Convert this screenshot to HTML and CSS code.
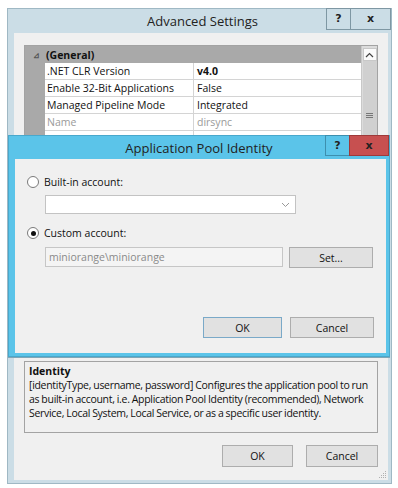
FILE: index.html
```html
<!DOCTYPE html>
<html>
<head>
<meta charset="utf-8">
<link rel="stylesheet" href="styles.css">
</head>
<body>
<div class="win">
  <div class="titlebar">
    <div class="title">Advanced Settings</div>
    <div class="tbtns">
      <div class="tb help">?</div>
      <div class="tb close">x</div>
    </div>
  </div>
  <div class="client">
    <div class="grid">
      <div class="gmain">
        <div class="ghead"><span class="exp">&#8895;</span><span class="gtitle">(General)</span></div>
        <div class="grow"><div class="gut"></div><div class="gname">.NET CLR Version</div><div class="gval bold">v4.0</div></div>
        <div class="grow"><div class="gut"></div><div class="gname">Enable 32-Bit Applications</div><div class="gval">False</div></div>
        <div class="grow"><div class="gut"></div><div class="gname">Managed Pipeline Mode</div><div class="gval">Integrated</div></div>
        <div class="grow dim"><div class="gut"></div><div class="gname">Name</div><div class="gval">dirsync</div></div>
        <div class="grow"><div class="gut"></div><div class="gname">Queue Length</div><div class="gval">1000</div></div>
        <div class="gfill"><div class="gut"></div><div class="gblank"></div></div>
      </div>
      <div class="vscroll">
        <div class="sarrow"><svg width="9" height="6" viewBox="0 0 9 6"><polyline points="1,5 4.5,1.5 8,5" fill="none" stroke="#444" stroke-width="1.2"/></svg></div>
        <div class="sthumb"><svg width="7" height="6" viewBox="0 0 7 6"><path d="M0 0.5H7M0 2.5H7M0 4.5H7" stroke="#777" stroke-width="1"/></svg></div>
      </div>
    </div>
    <div class="desc">
      <div class="dtitle">Identity</div>
      <div class="dtext">[identityType, username, password] Configures the application pool to run<br>as built-in account, i.e. Application Pool Identity (recommended), Network<br>Service, Local System, Local Service, or as a specific user identity.</div>
    </div>
    <div class="btnrow">
      <div class="btn okmain">OK</div>
      <div class="btn cancelmain">Cancel</div>
    </div>
  </div>
  <div class="grip"><svg width="8" height="8" viewBox="0 0 8 8"><g fill="#b0b0b0"><rect x="6" y="0" width="1" height="1"/><rect x="4" y="2" width="1" height="1"/><rect x="6" y="2" width="1" height="1"/><rect x="2" y="4" width="1" height="1"/><rect x="4" y="4" width="1" height="1"/><rect x="6" y="4" width="1" height="1"/><rect x="0" y="6" width="1" height="1"/><rect x="2" y="6" width="1" height="1"/><rect x="4" y="6" width="1" height="1"/><rect x="6" y="6" width="1" height="1"/></g></svg></div>

  <div class="dlg">
    <div class="dtitlebar">
      <div class="dlgtitle">Application Pool Identity</div>
      <div class="tbtns">
        <div class="tb dhelp">?</div>
        <div class="tb dclose">x</div>
      </div>
    </div>
    <div class="dinner">
      <div class="optrow first"><span class="radio"></span><span class="olabel">Built-in account:</span></div>
      <div class="combo"><svg width="9" height="6" viewBox="0 0 9 6"><polyline points="1,1 4.5,4.5 8,1" fill="none" stroke="#999" stroke-width="1"/></svg></div>
      <div class="optrow second"><span class="radio on"></span><span class="olabel">Custom account:</span></div>
      <div class="acctrow">
        <div class="acct">miniorange\miniorange</div>
        <div class="btn setbtn">Set...</div>
      </div>
      <div class="dbtnrow">
        <div class="btn dok">OK</div>
        <div class="btn dcancel">Cancel</div>
      </div>
    </div>
  </div>
</div>
</body>
</html>
```
FILE: styles.css
```css
* { box-sizing: border-box; }
html, body { margin: 0; padding: 0; background: #ffffff; }
body {
  font-family: "Open Sans", "Noto Sans", sans-serif;
  font-size: 10.5px;
  color: #111;
  width: 398px;
  height: 488px;
  overflow: hidden;
}
.win {
  position: relative;
  margin: 8px 0 0 7px;
  width: 385px;
  height: 476px;
  background: #cbdde6;
  border: 1px solid #9fb8c4;
  display: flex;
  flex-direction: column;
}
.titlebar {
  height: 24px;
  display: flex;
  position: relative;
}
.title {
  flex: 1;
  text-align: center;
  font-size: 13px;
  line-height: 25px;
  color: #222;
  padding-left: 6px;
}
.tbtns {
  position: absolute;
  right: 0;
  top: -1px;
  display: flex;
}
.tb {
  height: 22px;
  border: 1px solid #7e97a3;
  font-family: "DejaVu Sans", sans-serif;
  font-weight: bold;
  font-size: 11px;
  line-height: 20px;
  text-align: center;
  color: #222;
}
.help { width: 24px; border-right: none; }
.close { width: 41px; }
.client {
  margin: 0 3px 3px 6px;
  flex: 1;
  background: #f0f0f0;
  padding: 12px 10px 0 10px;
  display: flex;
  flex-direction: column;
}
.grid {
  height: 311px;
  border: 1px solid #a3a3a3;
  display: flex;
  background: #fff;
}
.gmain { flex: 1; display: flex; flex-direction: column; }
.ghead {
  height: 17px;
  background: #a9a9a9;
  display: flex;
  align-items: center;
  font-weight: bold;
}
.exp { width: 20px; font-size: 8px; color: #555; text-align: center; padding-left: 2px; }
.gtitle { padding-left: 1px; }
.grow { height: 17px; display: flex; }
.gut { width: 20px; background: #a9a9a9; flex: none; }
.gname {
  width: 149px;
  border-right: 1px solid #d4d4d4;
  border-bottom: 1px solid #d4d4d4;
  padding-left: 2px;
  line-height: 16px;
  white-space: nowrap;
}
.gval {
  flex: 1;
  border-bottom: 1px solid #d4d4d4;
  padding-left: 3px;
  line-height: 16px;
}
.bold { font-weight: bold; }
.dim .gname, .dim .gval { color: #9a9a9a; }
.gfill { flex: 1; display: flex; }
.gblank { flex: 1; }
.vscroll {
  width: 16px;
  background: #dcdcdc;
  border-left: 1px solid #c8c8c8;
  display: flex;
  flex-direction: column;
  align-items: center;
  padding-top: 2px;
}
.sarrow {
  width: 14px;
  height: 13px;
  background: #fbfbfb;
  border: 1px solid #c8c8c8;
  display: flex;
  align-items: center;
  justify-content: center;
}
.sthumb {
  width: 14px;
  height: 110px;
  background: #d0d0d0;
  display: flex;
  align-items: center;
  justify-content: center;
}
.desc {
  margin-top: 5px;
  height: 72px;
  border: 1px solid #a3a3a3;
  padding: 2px 2px 2px 4px;
  line-height: 14px;
}
.dtitle { font-weight: bold; }
.dtext { letter-spacing: -0.3px; word-spacing: -0.3px; white-space: nowrap; }
.btnrow {
  margin-top: 12px;
  display: flex;
  justify-content: flex-end;
  gap: 13px;
}
.btn {
  height: 22px;
  background: #e1e1e1;
  border: 1px solid #adadad;
  text-align: center;
  line-height: 20px;
}
.okmain { width: 71px; }
.cancelmain { width: 72px; }
.grip { position: absolute; right: 4px; bottom: 4px; width: 8px; height: 8px; }
.grip svg { display: block; }

/* dialog */
.dlg {
  position: absolute;
  left: 0;
  top: 126px;
  width: 382px;
  height: 222px;
  background: #5bc4e9;
  border: 1px solid #49a8cc;
  box-shadow: 0 1px 0 #7fa6b6;
  display: flex;
  flex-direction: column;
}
.dtitlebar { height: 23px; position: relative; }
.dlgtitle {
  text-align: center;
  font-size: 13px;
  line-height: 25px;
  color: #222;
}
.dtitlebar .tbtns { top: -1px; right: 0; }
.dhelp { width: 24px; height: 21px; border-color: #3d8fae; border-right: none; line-height: 19px; }
.dclose { width: 40px; height: 21px; background: #c75050; border-color: #9e3a3a; line-height: 19px; }
.dinner {
  flex: 1;
  margin: 0 3px 3px 6px;
  background: #f0f0f0;
  padding: 0 0 0 12px;
  display: flex;
  flex-direction: column;
}
.optrow { display: flex; align-items: center; height: 14px; }
.optrow.first { margin-top: 16px; }
.optrow.second { margin-top: 12px; }
.radio {
  width: 12px;
  height: 12px;
  border-radius: 50%;
  border: 1px solid #7a7a7a;
  background: #fff;
  display: inline-block;
  position: relative;
  flex: none;
}
.radio.on::after {
  content: "";
  position: absolute;
  left: 2.5px;
  top: 2.5px;
  width: 5px;
  height: 5px;
  border-radius: 50%;
  background: #111;
}
.olabel { margin-left: 5px; }
.combo {
  margin: 6px 0 0 18px;
  width: 251px;
  height: 19px;
  background: #fff;
  border: 1px solid #c3c3c3;
  display: flex;
  align-items: center;
  justify-content: flex-end;
  padding-right: 5px;
}
.acctrow { display: flex; margin: 7px 0 0 18px; gap: 6px; }
.acct {
  width: 238px;
  height: 20px;
  background: #f4f4f4;
  border: 1px solid #c6c6c6;
  color: #8a8a8a;
  padding-left: 3px;
  line-height: 18px;
}
.setbtn { width: 84px; height: 21px; }
.dbtnrow {
  margin-top: 49px;
  display: flex;
  justify-content: flex-end;
  gap: 8px;
  padding-right: 12px;
}
.dok { width: 79px; height: 21px; border-color: #7aa9c8; }
.dcancel { width: 84px; height: 21px; }
```
